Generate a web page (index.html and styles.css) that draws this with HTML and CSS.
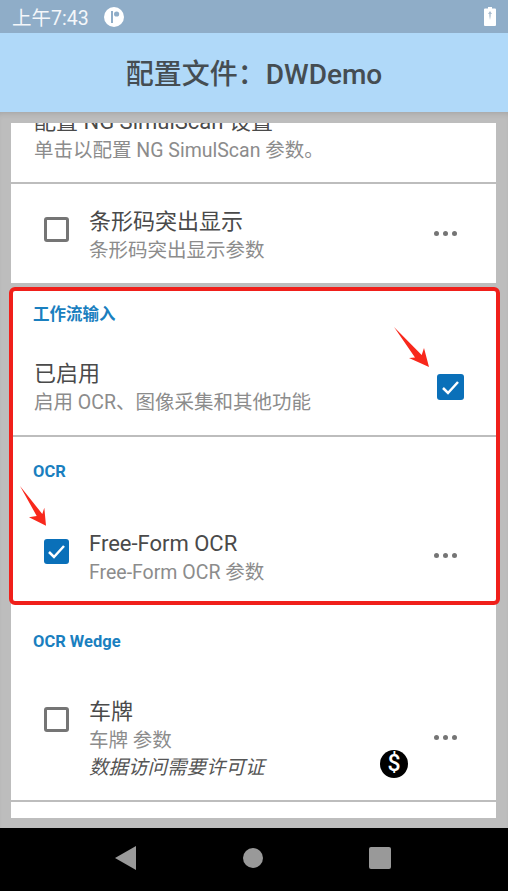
FILE: index.html
```html
<!DOCTYPE html>
<html lang="zh-CN">
<head>
  <meta charset="UTF-8" />
  <meta name="viewport" content="width=device-width, initial-scale=1.0"/>
  <title>配置文件：DWDemo</title>
  <link rel="stylesheet" href="styles.css">
</head>
<body>
  <div class="status-bar">
    <span class="clock">上午7:43</span>
    <svg class="notify-icon" width="20" height="20" viewBox="0 0 20 20">
      <circle cx="10" cy="10" r="10" fill="#fff"/>
      <rect x="7" y="4" width="2" height="12" fill="#8fadc8"/>
      <circle cx="12.6" cy="7" r="2.6" fill="#8fadc8"/>
    </svg>
    <svg class="battery-icon" width="12" height="19" viewBox="0 0 12 19">
      <path d="M4 0h4v1.500h3a1 1 0 0 1 1 1V18a1 1 0 0 1-1 1H1a1 1 0 0 1-1-1V2.500a1 1 0 0 1 1-1h3z" fill="#fff"/>
      <path d="M6 4l2 3-1.300 0 0 2L6 13 5.300 9l0-2L4 7z" fill="#a9bccf"/>
    </svg>
  </div>

  <header class="app-bar">
    <h1>配置文件：DWDemo</h1>
  </header>

  <main class="list">
    <section class="card card-clipped">
      <div class="item-title">配置 NG SimulScan 设置</div>
      <div class="item-sub">单击以配置 NG SimulScan 参数。</div>
    </section>

    <section class="card card-barcode">
      <div class="row">
        <span class="checkbox"></span>
        <div class="row-text">
          <div class="item-title">条形码突出显示</div>
          <div class="item-sub">条形码突出显示参数</div>
        </div>
        <svg class="more" width="23" height="5" viewBox="0 0 23 5"><circle cx="2.500" cy="2.500" r="2.500"/><circle cx="11.500" cy="2.500" r="2.500"/><circle cx="20.500" cy="2.500" r="2.500"/></svg>
      </div>
    </section>

    <section class="card card-workflow">
      <div class="group group-input">
        <h2 class="group-title">工作流输入</h2>
        <div class="row row-plain">
          <div class="row-text">
            <div class="item-title">已启用</div>
            <div class="item-sub">启用 OCR、图像采集和其他功能</div>
          </div>
          <span class="checkbox checked checkbox-right">
            <svg width="19" height="15" viewBox="0 0 19 15"><path d="M2 8l5 5L17 2" fill="none" stroke="#fff" stroke-width="2.500"/></svg>
          </span>
        </div>
      </div>

      <div class="group group-ocr">
        <h2 class="group-title">OCR</h2>
        <div class="row row-ocr">
          <span class="checkbox checked">
            <svg width="19" height="15" viewBox="0 0 19 15"><path d="M2 8l5 5L17 2" fill="none" stroke="#fff" stroke-width="2.500"/></svg>
          </span>
          <div class="row-text">
            <div class="item-title">Free-Form OCR</div>
            <div class="item-sub">Free-Form OCR 参数</div>
          </div>
          <svg class="more" width="23" height="5" viewBox="0 0 23 5"><circle cx="2.500" cy="2.500" r="2.500"/><circle cx="11.500" cy="2.500" r="2.500"/><circle cx="20.500" cy="2.500" r="2.500"/></svg>
        </div>
      </div>

      <div class="group group-wedge">
        <h2 class="group-title">OCR Wedge</h2>
        <div class="row row-wedge">
          <span class="checkbox"></span>
          <div class="row-text">
            <div class="item-title">车牌</div>
            <div class="item-sub">车牌 参数</div>
            <div class="item-note">数据访问需要许可证</div>
          </div>
          <span class="license-badge">$</span>
          <svg class="more" width="23" height="5" viewBox="0 0 23 5"><circle cx="2.500" cy="2.500" r="2.500"/><circle cx="11.500" cy="2.500" r="2.500"/><circle cx="20.500" cy="2.500" r="2.500"/></svg>
        </div>
      </div>

      <div class="group-next"></div>
    </section>

    <!-- annotations drawn over the list -->
    <div class="red-frame"></div>
    <svg class="arrow arrow-right" width="38" height="42" viewBox="0 0 38 42">
      <polygon points="0,0 27.700,28 30,21 35,40 15,31 21,30.500" fill="#f8281c"/>
    </svg>
    <svg class="arrow arrow-left" width="28" height="42" viewBox="0 0 28 42">
      <polygon points="0,1 22.300,29 24.300,22.700 26,40.700 9,32.300 16.700,31" fill="#f8281c"/>
    </svg>
  </main>

  <nav class="nav-bar">
    <svg width="22" height="24" viewBox="0 0 22 24"><polygon points="21,0 21,24 0,12" fill="#999"/></svg>
    <svg width="20" height="20" viewBox="0 0 20 20"><circle cx="10" cy="10" r="10" fill="#999"/></svg>
    <svg width="22" height="22" viewBox="0 0 22 22"><rect width="22" height="22" rx="2" fill="#999"/></svg>
  </nav>
</body>
</html>
```

FILE: styles.css
```css
* {
  box-sizing: border-box;
}

body {
  font-family: Roboto, "Noto Sans CJK SC", sans-serif;
  margin: 0;
  width: 508px;
  height: 891px;
  overflow: hidden;
  background: #bdbdbd;
}

.status-bar {
  height: 33px;
  background: #8fadc8;
  display: flex;
  align-items: center;
  padding: 0 12px;
  color: #f4f7fa;
}

.clock {
  font-size: 19.5px;
  width: 92px;
}

.battery-icon {
  margin-left: auto;
  margin-top: -1px;
}

.app-bar {
  height: 79px;
  background: #b0d9f9;
  display: flex;
  align-items: center;
  justify-content: center;
  padding-bottom: 2px;
}

.app-bar h1 {
  margin: 0;
  font-size: 28px;
  font-weight: 500;
  color: #454d52;
}

.list {
  position: relative;
  height: 716px;
  padding: 11px 12px 0 11px;
  overflow: hidden;
  box-shadow: inset 0 5px 6px -4px rgba(0, 0, 0, 0.15);
}

.card {
  background: #fff;
}

.card-clipped {
  height: 59px;
  margin-bottom: 2px;
  padding: 0 23px 16px;
  overflow: hidden;
  display: flex;
  flex-direction: column;
  justify-content: flex-end;
  flex-shrink: 0;
}

.card-barcode {
  height: 99px;
  margin-bottom: 6px;
  padding-top: 24px;
}

.item-title {
  font-size: 22px;
  line-height: 28px;
  color: #4a4a4a;
  white-space: nowrap;
}

.item-sub {
  font-size: 19.5px;
  line-height: 30px;
  color: #8c8c8c;
  white-space: nowrap;
}

.item-note {
  margin-top: -2px;
  font-size: 19.5px;
  line-height: 28px;
  font-style: italic;
  color: #555;
  white-space: nowrap;
}

.row {
  display: flex;
  align-items: flex-start;
  padding: 0 39px 0 33px;
}

.row-text {
  flex: 1;
  margin-left: 20px;
}

.checkbox {
  width: 25px;
  height: 25px;
  margin-top: 9px;
  border: 3px solid #757575;
  border-radius: 3px;
  flex-shrink: 0;
}

.checkbox.checked {
  background: #0a70b9;
  border: none;
  display: flex;
  align-items: center;
  justify-content: center;
}

.more {
  margin-top: 23px;
  fill: #757575;
  flex-shrink: 0;
}

.group-title {
  margin: 0 0 0 22px;
  font-size: 16.5px;
  line-height: 20px;
  font-weight: 700;
  color: #1a7fbf;
}

.group-input {
  height: 148px;
  padding-top: 16px;
  border-bottom: 2px solid #bdbdbd;
}

.row-plain {
  margin-top: 35px;
  padding: 0 32px 0 3px;
}

.checkbox-right {
  width: 27px;
  height: 26px;
  margin-top: 14px;
}

.group-ocr {
  padding-top: 25px;
}

.row-ocr {
  margin-top: 48px;
}

.group-wedge {
  height: 214px;
  padding-top: 44px;
  border-bottom: 2px solid #bdbdbd;
}

.row-wedge {
  position: relative;
  margin-top: 46px;
}

.row-wedge .more {
  margin-top: 37px;
}

.license-badge {
  position: absolute;
  left: 369px;
  top: 52px;
  width: 28px;
  height: 28px;
  border-radius: 50%;
  background: #000;
  color: #fff;
  font-size: 23px;
  line-height: 28px;
  font-weight: 500;
  text-align: center;
}

.group-next {
  height: 16px;
}

.red-frame {
  position: absolute;
  left: 9px;
  top: 175px;
  width: 491px;
  height: 318px;
  border: 4px solid #f01f1a;
  border-radius: 6px;
}

.arrow {
  position: absolute;
}

.arrow-right {
  left: 394px;
  top: 215px;
}

.arrow-left {
  left: 20px;
  top: 373px;
}

.nav-bar {
  height: 63px;
  background: #000;
  position: relative;
  display: grid;
  grid-template-columns: 115px 22px 106px 20px 106px 22px;
  align-items: center;
  padding-bottom: 4px;
}

.nav-bar svg:nth-child(1) {
  grid-column: 2;
}

.nav-bar svg:nth-child(2) {
  grid-column: 4;
}

.nav-bar svg:nth-child(3) {
  grid-column: 6;
}
```
